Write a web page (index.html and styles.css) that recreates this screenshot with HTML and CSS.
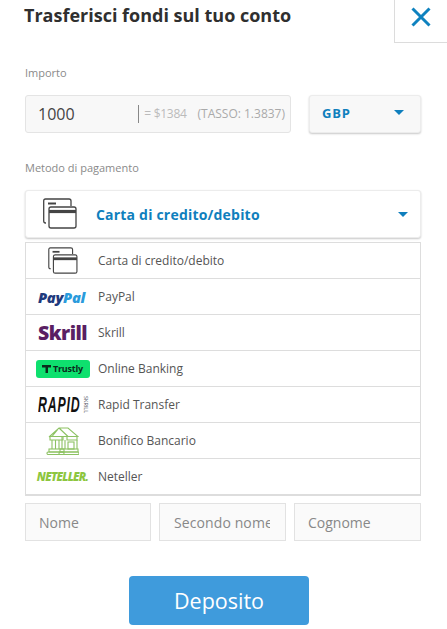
FILE: index.html
```html
<!DOCTYPE html>
<html lang="it">
<head>
<meta charset="utf-8">
<title>Trasferisci fondi</title>
<link rel="stylesheet" href="styles.css">
</head>
<body>
<div class="modal">
  <header class="head">
    <h1 class="title">Trasferisci fondi sul tuo conto</h1>
    <button class="close" aria-label="Chiudi">
      <svg width="20" height="20" viewBox="0 0 20 20"><path d="M1.5 1.5L18.500 18.500M18.500 1.500L1.500 18.500" stroke="#0f82bf" stroke-width="3" fill="none"/></svg>
    </button>
  </header>
  <div class="label label-amount">Importo</div>
  <div class="amount-row">
    <div class="amount">
      <span class="amount-value">1000</span>
      <span class="amount-note"><span class="note-eq">= $1384</span><span>(TASSO: 1.3837)</span></span>
    </div>
    <div class="currency"><span>GBP</span><i class="caret"></i></div>
  </div>
  <div class="label label-method">Metodo di pagamento</div>
  <div class="method">
    <svg class="cards-big" width="34" height="32" viewBox="0 0 34 32"><use href="#cards"/></svg>
    <span class="method-name">Carta di credito/debito</span>
    <i class="caret caret-method"></i>
  </div>
  <svg class="defs" width="0" height="0"><defs>
    <g id="cards" fill="none" stroke="#444" stroke-width="1.300">
      <path d="M3 25H2.500Q.7 25 .7 23V3Q.7 1 2.500 1H26Q28 1 28 3V8"/>
      <rect x="6" y="9" width="27" height="21" rx="2" fill="#fff"/>
      <path d="M6 13.500H33" stroke-width="3.200"/>
      <path d="M5 5.500H13" stroke-width="2"/>
    </g>
  </defs></svg>
  <ul class="list">
    <li class="row"><span class="logo"><svg width="30" height="27" viewBox="0 0 34 31"><use href="#cards"/></svg></span><span>Carta di credito/debito</span></li>
    <li class="row"><span class="logo"><span class="paypal"><b>Pay</b><b class="pal">Pal</b></span></span><span>PayPal</span></li>
    <li class="row"><span class="logo"><span class="skrill">Skrill</span></span><span>Skrill</span></li>
    <li class="row"><span class="logo"><span class="trustly"><svg width="9" height="8" viewBox="0 0 9 8"><path d="M0 0H9V2.500H6V8H3.500V2.500H0Z" fill="#0b2a1c"/></svg>Trustly</span></span><span>Online Banking</span></li>
    <li class="row"><span class="logo"><span class="rapid">RAPID</span><span class="rapid-side">SKRILL</span></span><span>Rapid Transfer</span></li>
    <li class="row"><span class="logo"><svg width="33" height="28" viewBox="0 0 33 28" fill="none" stroke="#8dc263" stroke-width="1.100"><path d="M3 10L13 1H22L32 9.500H3M13 1L22 9.500M13 1L6 9.500"/><path d="M4 10V13H17V10M21 10V13H31V10"/><path d="M6 13V22M9.500 13V22M13 13V22M16 10V22M31 13V22M19 13V22"/><rect x="22" y="15" width="6" height="7"/><rect x="3" y="22" width="15" height="3"/><rect x="1" y="25" width="17" height="2.500" rx="1"/><rect x="14" y="22" width="18" height="3"/><rect x="13" y="25" width="20" height="2.500" rx="1"/></svg></span><span>Bonifico Bancario</span></li>
    <li class="row"><span class="logo"><span class="neteller">NETELLER<small>.</small></span></span><span>Neteller</span></li>
  </ul>
  <div class="names">
    <div class="name">Nome</div>
    <div class="name name-clip"><span class="clip">Secondo nome</span></div>
    <div class="name">Cognome</div>
  </div>
  <div class="actions"><button class="deposit">Deposito</button></div>
</div>
</body>
</html>
```
FILE: styles.css
```css
* { box-sizing: border-box; }
html, body { margin: 0; padding: 0; background: #fff; }
body { font-family: "Open Sans", sans-serif; color: #333; overflow: hidden; height: 629px; }
.modal { width: 447px; padding: 0 26px 0 25px; }
.head { display: flex; justify-content: space-between; height: 43px; margin-right: -26px; }
.title { margin: 4px 0 0 -1px; font-size: 18px; line-height: 22px; font-weight: 700; color: #2f2f2f; }
.close { width: 53px; height: 43px; padding: 0 0 8px; background: #fff; border: 0; border-left: 1px solid #dcdcdc; border-bottom: 1px solid #dcdcdc; display: flex; align-items: center; justify-content: center; }
.label { font-size: 11px; line-height: 15px; color: #8a8a8a; }
.label-amount { margin-top: 22px; }
.label-method { margin-top: 27px; }
.amount-row { display: flex; justify-content: space-between; margin-top: 15px; }
.amount { width: 266px; height: 38px; background: #f8f8f8; border: 1px solid #e4e4e4; border-radius: 3px; display: flex; align-items: center; justify-content: space-between; padding: 0 5px 0 12px; }
.amount-value { font-size: 16px; color: #444; }
.amount-note { font-size: 12px; color: #aaa; border-left: 1px solid #888; padding-left: 5px; line-height: 18px; display: flex; gap: 11px; margin-left: auto; }
.note-eq { color: #bbb; letter-spacing: -.3px; }
.currency { width: 112px; height: 38px; background: #f8f8f8; border-radius: 3px; box-shadow: 0 1px 2px rgba(0,0,0,.22); border: 1px solid #ececec; display: flex; align-items: center; justify-content: space-between; padding: 0 16px 3px 12px; font-size: 13px; font-weight: 700; letter-spacing: .8px; color: #0f7fbd; }
.caret { width: 0; height: 0; border-left: 5px solid transparent; border-right: 5px solid transparent; border-top: 5px solid #0f7fbd; }
.method { margin-top: 15px; height: 48px; border: 1px solid #ececec; border-radius: 3px; box-shadow: 0 1px 2px rgba(0,0,0,.22); background: #fff; display: flex; align-items: center; padding-left: 17px; padding-right: 12px; font-size: 14px; font-weight: 700; color: #0f7fbd; }
.cards-big { flex: none; }
.method-name { margin-left: 19px; letter-spacing: .2px; }
.caret-method { margin-left: auto; }
.defs { position: absolute; }
.list { list-style: none; margin: 4px 0 0; padding: 0; height: 254px; border-left: 1px solid #ddd; border-right: 1px solid #ddd; border-top: 1px solid #ddd; border-bottom: 2px solid #ddd; }
.row { height: 36px; display: flex; align-items: center; border-bottom: 1px solid #ddd; font-size: 12px; color: #555; }
.row:last-child { border-bottom: 0; padding-bottom: 1px; }
.logo { width: 72px; flex: none; display: flex; align-items: center; justify-content: center; padding-left: 1px; }
.paypal { font-size: 14.700px; font-style: italic; letter-spacing: -.3px; color: #1f3a7d; margin-left: -2px; }
.paypal b { font-weight: 800; }
.pal { color: #2a9bdc; }
.skrill { font-size: 19.500px; line-height: 20px; font-weight: 800; color: #5a1f63; letter-spacing: -.5px; }
.trustly { width: 54px; height: 18px; background: #0ee06e; border-radius: 3px; color: #0b2a1c; font-size: 9px; font-weight: 700; display: flex; align-items: center; justify-content: center; gap: 2px; letter-spacing: -.2px; }
.rapid { display: block; width: 44px; white-space: nowrap; font-size: 16px; font-style: italic; font-weight: 700; font-family: "Liberation Sans", sans-serif; color: #111; letter-spacing: 1.100px; transform: scale(.77, 1.35); transform-origin: left center; }
.rapid-side { writing-mode: vertical-rl; font-size: 5.500px; line-height: 5px; color: #556; margin-left: 1px; }
.neteller { font-size: 11.500px; font-style: italic; font-weight: 800; letter-spacing: -.7px; color: #8dc63f; }
.neteller small { font-size: 11px; }
.names { display: grid; grid-template-columns: 126px 127px 127px; gap: 8px; margin-top: 7px; }
.name { height: 38px; border: 1px solid #e2e2e2; background: #fafafa; padding: 0 13px; display: flex; align-items: center; font-size: 14px; color: #888; min-width: 0; }
.name-clip { padding: 0 15px 0 14px; }
.clip { display: block; overflow: hidden; white-space: nowrap; letter-spacing: .1px; }
.actions { display: flex; margin-top: 35px; padding-left: 104px; }
.deposit { width: 180px; height: 49px; background: #3f9bdc; color: #fff; border: 0; border-radius: 4px; font-family: "Open Sans", sans-serif; font-size: 21.500px; padding: 0; }
```
